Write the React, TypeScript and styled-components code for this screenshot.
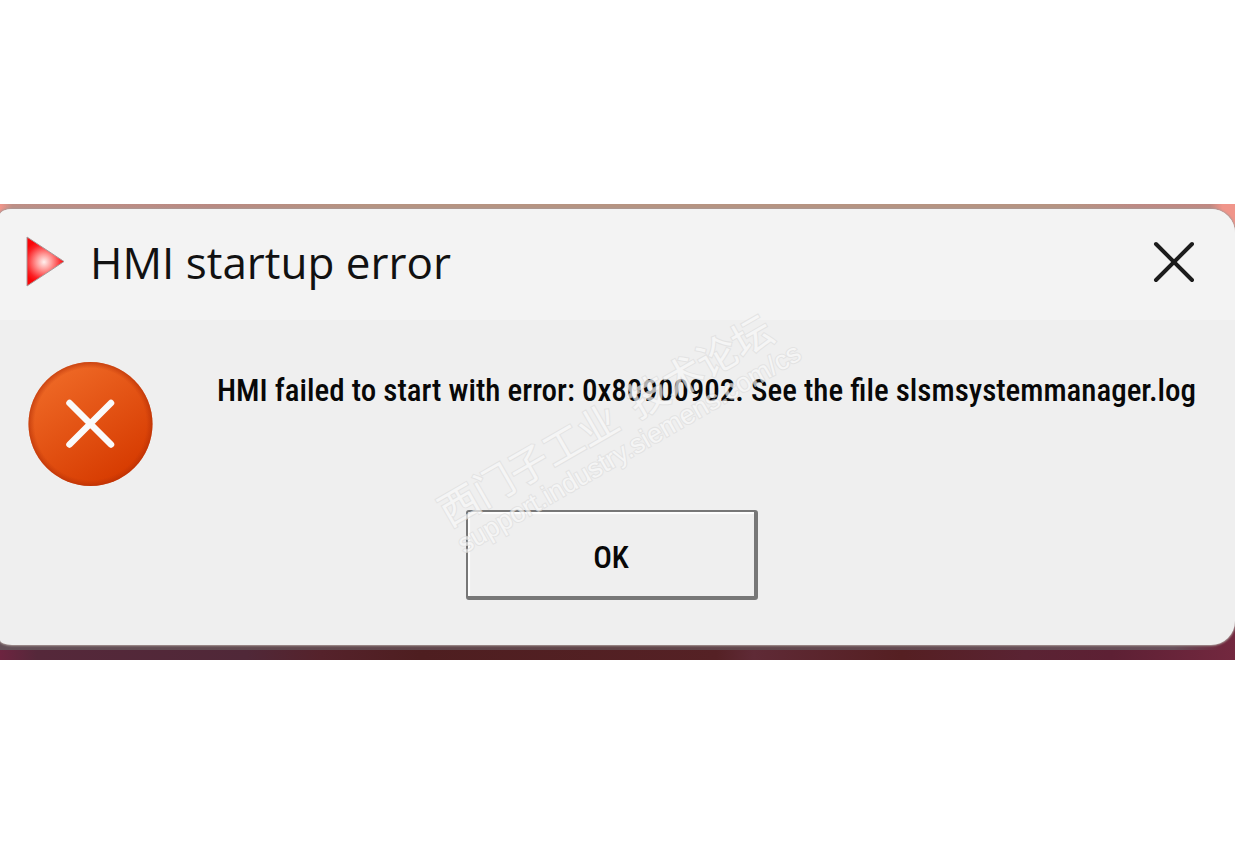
import React from "react";
import styled, { createGlobalStyle } from "styled-components";

const GlobalStyle = createGlobalStyle`
  *, *::before, *::after { box-sizing: border-box; }
  body { margin: 0; background: #ffffff; font-family: "Open Sans", sans-serif; }
  svg { flex: none; }
`;

const Page = styled.main`
  min-height: 100vh;
  display: flex;
  flex-direction: column;
  justify-content: center;
  overflow: hidden;
`;

const Desktop = styled.div`
  padding: 5px 0 15px;
  background:
    linear-gradient(90deg, #f0958a 0, #bd8f86 1%, #bb8c84 12%, #b98a82 17%, #b69482 30%, #b69482 86%, #bd8a84 92%, #c08982 98%, #f0958a 99%) top / 100% 40px no-repeat,
    linear-gradient(90deg, #645058, #604448 50%, #68505a 96%, transparent) bottom 10px left / 99% 12px no-repeat,
    linear-gradient(90deg, #6d2440 0, #55283a 3%, #502838 20%, #55222b 26%, #4e1e20 34%, #552125 58%, #5f2a36 61%, #551f22 73%, #5a2333 83%, #5d2034 90%, #73283f 100%);
`;

const Dialog = styled.section`
  position: relative;
  border-radius: 12px 24px 24px 12px / 6px 24px 24px 5px;
  background: #efefef;
  box-shadow: 0 0 2px 1px #a89896;
  overflow: hidden;
`;

const TitleBar = styled.header`
  display: flex;
  align-items: center;
  height: 111px;
  padding: 0 32px 6px 24px;
  background: #f3f3f3;
`;

const Title = styled.h1`
  flex: 1;
  margin: 0 0 0 22px;
  color: #111111;
  font-size: 44px;
  font-weight: 400;
  line-height: 60px;
`;

const CloseButton = styled.button`
  display: flex;
  padding: 8px;
  border: 0;
  background: transparent;
`;

const Body = styled.div`
  display: flex;
  align-items: flex-start;
  gap: 64px;
  padding: 41px 24px 0 27px;
`;

const Message = styled.p`
  margin: 10px 0 0;
  color: #080808;
  font-family: "Roboto Condensed", Roboto, sans-serif;
  font-size: 31px;
  font-weight: 500;
  font-variant-numeric: slashed-zero;
  line-height: 40px;
  white-space: nowrap;
`;

const Actions = styled.footer`
  display: flex;
  justify-content: center;
  padding: 23px 11px 45px 0;
`;

const OkButton = styled.button`
  width: 292px;
  height: 90px;
  padding: 8px 0 0;
  border: solid #777777;
  border-width: 2px 4px 4px 2px;
  border-radius: 3px;
  background: #efefef;
  box-shadow: inset 2px 2px 1px #ffffff;
  color: #080808;
  font-family: "Roboto Condensed", Roboto, sans-serif;
  font-size: 31px;
  font-weight: 500;
  line-height: 40px;
`;

const Watermark = styled.div`
  position: absolute;
  top: 180px;
  left: 422px;
  width: 400px;
  color: #f8f8f8;
  -webkit-text-stroke: 2px #dedede;
  paint-order: stroke fill;
  opacity: 0.7;
  transform: rotate(-30deg);
  white-space: pre;
  pointer-events: none;
`;

const WatermarkName = styled.div`
  font-family: "Noto Sans CJK SC", sans-serif;
  font-size: 40px;
  font-weight: 400;
  line-height: 44px;
`;

const WatermarkSite = styled.div`
  font-family: "Liberation Sans", sans-serif;
  font-size: 27px;
  line-height: 32px;
`;

const AppIcon = () => (
  <svg width="44" height="54" viewBox="0 0 44 54" aria-hidden="true">
    <defs>
      <radialGradient id="glow" gradientUnits="userSpaceOnUse" cx="20" cy="27" r="22">
        <stop offset="0" stopColor="#fff0ee" />
        <stop offset="0.35" stopColor="#ff9a98" />
        <stop offset="0.8" stopColor="#fb2024" />
        <stop offset="1" stopColor="#fa0508" />
      </radialGradient>
    </defs>
    <path d="M3 2 L40 26.5 L3 51 Z" fill="url(#glow)" stroke="#a89a9a" strokeWidth="1" />
  </svg>
);

const ErrorIcon = () => (
  <svg width="126" height="126" viewBox="0 0 126 126" role="img" aria-label="Error">
    <defs>
      <linearGradient id="disc" x1="0.2" y1="0.1" x2="0.75" y2="0.95">
        <stop offset="0" stopColor="#ee6825" />
        <stop offset="1" stopColor="#d63a00" />
      </linearGradient>
      <radialGradient id="rim">
        <stop offset="0.9" stopColor="#b83208" stopOpacity="0" />
        <stop offset="1" stopColor="#b02c06" stopOpacity="0.6" />
      </radialGradient>
    </defs>
    <circle cx="63.5" cy="63" r="62" fill="url(#disc)" />
    <circle cx="63.5" cy="63" r="62" fill="url(#rim)" />
    <path d="M42.5 42 L84 83.5 M84 42 L42.5 83.5" stroke="#fafafa" strokeWidth="6.5" strokeLinecap="round" />
  </svg>
);

const CloseIcon = () => (
  <svg width="42" height="42" viewBox="0 0 42 42" aria-hidden="true">
    <path d="M3 3 L39 39 M39 3 L3 39" stroke="#1c1c1c" strokeWidth="4" strokeLinecap="round" />
  </svg>
);

export default function App() {
  return (
    <>
      <GlobalStyle />
      <Page>
        <Desktop>
          <Dialog role="alertdialog" aria-labelledby="title" aria-describedby="message">
            <TitleBar>
              <AppIcon />
              <Title id="title">HMI startup error</Title>
              <CloseButton type="button" aria-label="Close">
                <CloseIcon />
              </CloseButton>
            </TitleBar>
            <Body>
              <ErrorIcon />
              <Message id="message">
                HMI failed to start with error: 0x80900902. See the file slsmsystemmanager.log
              </Message>
            </Body>
            <Actions>
              <OkButton type="button">OK</OkButton>
            </Actions>
            <Watermark>
              <WatermarkName>西门子工业{"  "}技术论坛</WatermarkName>
              <WatermarkSite>support.industry.siemens.com/cs</WatermarkSite>
            </Watermark>
          </Dialog>
        </Desktop>
      </Page>
    </>
  );
}
